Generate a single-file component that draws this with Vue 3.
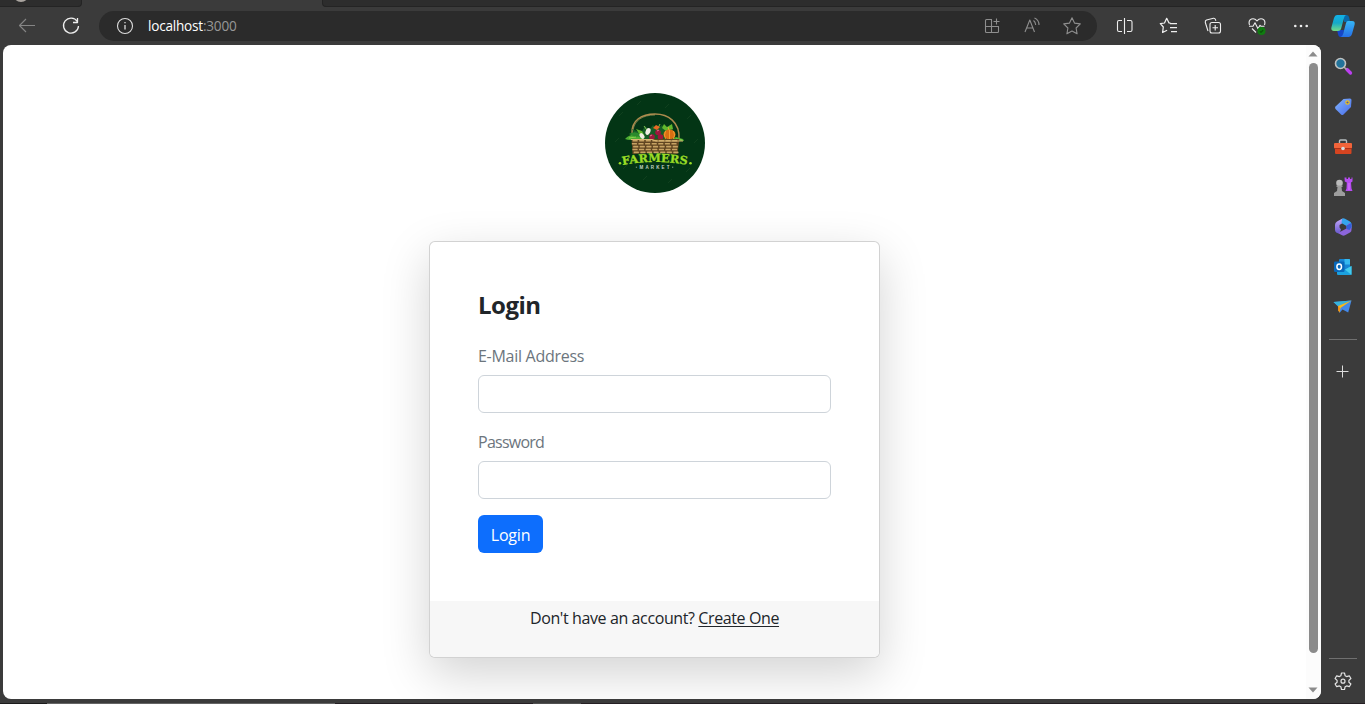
<script setup>
const stars = 'M12 3.8l2.5 5.3 5.8.8-4.2 4.1 1 5.8-5.1-2.8-5.1 2.8 1-5.8-4.2-4.1 5.8-.8z'
const bricks = []
for (let r = 0; r < 5; r++) {
  for (let c = 0; c < 7; c++) {
    bricks.push({ x: 27.5 + r * 0.3 + c * 6.6 - (r % 2) * 1, y: 47 + r * 2.9, key: r * 10 + c })
  }
}
</script>

<template>
  <div class="browser">
    <div class="tabs">
      <div class="tab tab-left"><span class="favicon"></span></div>
      <div class="tab-active"></div>
      <div class="tab tab-rest"></div>
    </div>
    <header class="toolbar">
      <svg class="ico dim" viewBox="0 0 24 24"><path d="M20 11.500H4.500M11 5l-6.500 6.500L11 18" /></svg>
      <svg class="ico refresh" viewBox="0 0 24 24"><path d="M18.300 7.500A7.500 7.500 0 1 0 19.500 12M18.500 4v4.500h-4.500" stroke-width="1.300" /></svg>
      <div class="address">
        <svg class="ico soft" viewBox="0 0 24 24"><circle cx="12" cy="12" r="7.500" /><path d="M12 11v4.500M12 8v1.300" stroke-width="1.300" /></svg>
        <span class="url">localhost<i>:3000</i></span>
        <div class="actions">
          <svg class="ico gray" viewBox="0 0 24 24"><path d="M12 5.500H6.500q-1 0-1 1v11q0 1 1 1h11q1 0 1-1v-5h-13M11.500 5.500v13M16.500 4.500v6M13.500 7.500h6" /></svg>
          <svg class="ico gray" viewBox="0 0 24 24"><path d="M5 18L9.800 6l4.700 12M6.800 14h6M13.500 6.500q2 1.500 2.200 4.500M14.500 4q4.500 2 4.500 7" /></svg>
          <svg class="ico gray" viewBox="0 0 24 24"><path :d="stars" /></svg>
        </div>
      </div>
      <div class="tools">
        <svg class="ico" viewBox="0 0 24 24"><path d="M9 6.500H6q-1.500 0-1.500 1.500v8q0 1.500 1.500 1.500h3M14 6.500h3.500q1.500 0 1.500 1.500v8q0 1.500-1.500 1.500H14M11.500 4v16" /></svg>
        <svg class="ico" viewBox="0 0 24 24"><path d="M13.500 9.200L12 9 9.700 4.300 7.500 9l-4.200.7 3 3.300-.7 5.500 4.500-2.300M13 9.500h7M13 13.500h7M14 17.500h6" stroke-width="1.250" /></svg>
        <svg class="ico" viewBox="0 0 24 24"><rect x="9" y="8.500" width="10.500" height="10.500" rx="2" /><path d="M14.200 11v5.500M11.500 13.700H17M7 17L4.300 8.500Q4 6.500 5.500 6l7-1.800q1.500-.2 2 1.500l.4 1" /></svg>
        <svg class="ico" viewBox="0 0 24 24"><path d="M4.500 11Q3 6.500 6.500 5q3-1 5.500 1.800Q14.500 4 17.500 5q3.500 1.500 2 6M4 12.300h4l2-3.500 3 6 2-3.500 1 1h3.500M7 14.500l4 4" /><circle cx="16.500" cy="17" r="4" fill="#107c10" stroke="none" /><path d="M14.800 17.300l1.200 1 2.200-2.300" stroke="#0b4d0b" /></svg>
        <svg class="ico" viewBox="0 0 24 24"><g fill="#eee" stroke="none"><circle cx="6.300" cy="12" r="1.300" /><circle cx="12" cy="12" r="1.300" /><circle cx="17.700" cy="12" r="1.300" /></g></svg>
      </div>
      <svg class="copilot" viewBox="0 0 24 24">
        <defs>
          <linearGradient id="ca" x1="0" y1="0" x2="0" y2="1"><stop offset="0" stop-color="#11b1e8" /><stop offset=".5" stop-color="#16a9c9" /><stop offset="1" stop-color="#74dc86" /></linearGradient>
          <linearGradient id="cb" x1="0" y1="0" x2="0" y2="1"><stop offset="0" stop-color="#36b6f5" /><stop offset="1" stop-color="#2670e8" /></linearGradient>
        </defs>
        <path d="M12 1h3.500q2 0 2.500 2l1.200 5h-6z" fill="#0868aa" />
        <path d="M6 16h7l-1 7H9.500Q7.500 23 7 20z" fill="#1546c8" />
        <path d="M6 1h9q-1.500.5-2 3l-3 11q-.8 2-3 2H3q-3.500 0-2.500-4L3 4Q3.800 1 6 1z" fill="url(#ca)" />
        <path d="M17 7h4q3.500 0 2.500 4L21 20q-.8 3-3 3H9.500q2-.5 2.600-3L15 9q.5-2 2-2z" fill="url(#cb)" />
      </svg>
    </header>

    <div class="middle">
      <main class="page">
        <div class="content">
          <svg class="logo" viewBox="0 0 100 100">
            <circle cx="50" cy="50" r="50" fill="#033515" />
            <g stroke="#174523" stroke-width=".7"><path d="M14 23l4-4M32 12l4-4M60 15l4-4M82 26l4-4M10 49l4-4M89 50l4-4M18 76l4-4M38 87l4-4M63 90l4-4M81 79l4-4" /></g>
            <path d="M27 41C26 27 37 21 50 21S75 29 74 46" fill="none" stroke="#ad8a4d" stroke-width="1.500" />
            <path d="M28 38C29 27 38 22 50 22" fill="none" stroke="#e0bb73" stroke-width=".5" />
            <path d="M27 36l9 4 4-7 4 4 4-5 4 4 5-4 4 5 7-1-2 12H33z" fill="#165d26" />
            <path d="M20 46q5-5 11-4l11 5q-6 1-11-1-6 2-11 0zM67 46l4-2 7 2 1 2H69z" fill="#4cae32" />
            <path d="M24 41q4-3 9-1l4 3-7 1z" fill="#2b8a2c" />
            <path d="M31 36l6 2 3 6-5-2zM57 35l2-4 3 3 5-3 1 5-7 2z" fill="#62b82d" />
            <path d="M24 45l7-1M71 46l6 1M39 33l3 4M55 31l-2 4" stroke="#9cdc55" stroke-width=".8" />
            <g fill="#f1eee4"><ellipse cx="37" cy="43" rx="2" ry="3.200" transform="rotate(-35 37 43)" /><ellipse cx="43" cy="38.500" rx="2.300" ry="3.500" transform="rotate(25 43 38.500)" /></g>
            <g fill="#9e173d"><circle cx="47" cy="44" r="2.800" /><circle cx="53" cy="39.500" r="2.800" /><circle cx="55.500" cy="44" r="2.800" /></g>
            <path d="M45 43l2-1M52 38l2-1" stroke="#f18aa0" stroke-width=".8" />
            <path d="M48 35l3-3 4 2-3 3z" fill="#e96a24" />
            <ellipse cx="64.500" cy="41.500" rx="6" ry="5" fill="#d96e13" />
            <path d="M60.500 38q-2 4 0 8M64.500 37v10M68.500 38q2 4 0 8M64 37l-1-3" fill="none" stroke="#ffb13a" stroke-width=".7" />
            <path d="M26.500 46h48l-2 15-22-1.500-23 1.500z" fill="#604521" />
            <g fill="#c7a363"><rect v-for="b in bricks" :key="b.key" :x="b.x" :y="b.y" width="5.200" height="1.600" rx=".5" /></g>
            <path d="M26 46.500h21l4 1.500h27" fill="none" stroke="#d9b775" stroke-width="1.200" />
            <path id="arc" d="M17.500 72Q50 66 83 72" fill="none" />
            <text class="brand"><textPath href="#arc" textLength="65" lengthAdjust="spacingAndGlyphs">FARMERS</textPath></text>
            <circle cx="15" cy="70.300" r="1.300" fill="#9bdd26" /><circle cx="85.500" cy="70.300" r="1.300" fill="#9bdd26" />
            <text class="sub" x="34.500" y="75.800" textLength="30">MARKET</text>
            <path d="M30.800 74.200h1.300M67 74.200h1.300" stroke="#c3d5c5" stroke-width=".7" />
          </svg>
          <section class="card">
            <form class="body" @submit.prevent>
              <h1>Login</h1>
              <label for="email">E-Mail Address</label>
              <input id="email" type="email" />
              <label class="tight" for="password">Password</label>
              <input id="password" type="password" />
              <button type="submit">Login</button>
            </form>
            <footer>Don't have an account? <a>Create One</a></footer>
          </section>
        </div>
        <div class="scrollbar">
          <svg class="arrow" viewBox="0 0 10 6"><path d="M5 .5L9.500 5.500h-9z" /></svg>
          <div class="thumb"></div>
          <svg class="arrow" viewBox="0 0 10 6"><path d="M5 5.500L9.500.5h-9z" /></svg>
        </div>
      </main>
      <aside class="sidebar">
        <svg class="app" viewBox="0 0 24 24"><path d="M16 15.500l3.500 3.500" stroke="#bb3ff0" stroke-width="3.300" stroke-linecap="round" /><path d="M13 13l2.500 2.500" stroke="#aaa" stroke-width="1.500" /><circle cx="9.500" cy="9.500" r="5" fill="#22739b" stroke="#bfc1c1" stroke-width="1.600" /></svg>
        <svg class="app" viewBox="0 0 24 24"><defs><linearGradient id="tag" x2="1" y2="1"><stop stop-color="#82b6ff" /><stop offset="1" stop-color="#486be8" /></linearGradient></defs><path d="M12.500 4L19 3.500q1.500 0 1.500 1.500l-.5 7-7.500 7.500q-1.200 1-2.400 0L4.500 14q-1-1.200 0-2.400z" fill="url(#tag)" /><circle cx="16.500" cy="7.500" r="1.700" fill="#4e5fa9" stroke="#f2c21a" stroke-width="1.200" /></svg>
        <svg class="app" viewBox="0 0 24 24"><path d="M8.500 8V6q0-1 1-1h5q1 0 1 1v2" fill="none" stroke="#b7bdc0" stroke-width="1.400" /><rect x="4" y="12" width="16.500" height="7" rx="1" fill="#d54420" /><rect x="3" y="8" width="18" height="5.500" rx="1" fill="#f2643a" /><path d="M3 13.500h18" stroke="#9d2b14" stroke-width=".8" /><circle cx="12" cy="13.500" r="1.800" fill="#d7dcdf" /></svg>
        <svg class="app" viewBox="0 0 24 24"><path d="M13.500 2.500h2V4H17V2.500h2V4h1.500V2.500h1v4l-1.500 1 .5 6 1 2.500h-7l1-2.500.3-6-2-1z" fill="#b64cf0" /><path d="M17 8h2v7h-2z" fill="#d87aff" opacity=".5" /><circle cx="8.500" cy="8" r="3.300" fill="#bbb" /><path d="M5.500 10.500h6V12h-1l.5 4 3 2v3H3v-3l3-2 .5-4h-1z" fill="#9d9d9d" /></svg>
        <svg class="app" viewBox="0 0 24 24"><defs><linearGradient id="ma" x2="0" y2="1"><stop stop-color="#c6a9fc" /><stop offset="1" stop-color="#6759cc" /></linearGradient></defs><path d="M11.500 3.500L6 6.500q-2 1.200-2 3.500v5q0 2 2 3l2.500.5 1.500-4-1.500-2V10l4-2.500z" fill="url(#ma)" /><path d="M11 3.700q1.500-.8 3 0l4.500 2.500q2 1 2 3.300v4L15.500 11l-5-3z" fill="#35a5ef" /><path d="M20.500 10v5q0 1.500-1.500 2.500l-5 2.800q-1.500.8-3 0l-4-2.300 8.500-4.500v-2.700l3-3z" fill="#8c65db" /><path d="M15.500 10.500L20.500 8v4l-2 3-3-1z" fill="#345fdb" /></svg>
        <svg class="app" viewBox="0 0 24 24"><path d="M8 5q0-1 1-1h9q1 0 1 1v10H8z" fill="#1685d4" /><path d="M13.500 4H18q1 0 1 1v4.500h-5.500z" fill="#35b9ef" /><path d="M6 11l7 4 7.500-4v8q0 1-1 1H7q-1 0-1-1z" fill="#1ba1df" /><path d="M14 14.500l6.500-3.500v9z" fill="#43cbed" /><rect x="3" y="6.500" width="10.500" height="10.500" rx="1.200" fill="#0867b9" /><ellipse cx="8.200" cy="11.700" rx="2.300" ry="2.700" fill="none" stroke="#fff" stroke-width="1.500" /></svg>
        <svg class="app" viewBox="0 0 24 24"><path d="M2.500 7L20.500 5.500l-3.300 12-5.700-3-3 3.500-1.500-6.500z" fill="#4288e9" /><path d="M2.500 7L20.500 5.500 7 11z" fill="#36b4dc" /><path d="M7 11L20.500 5.500 9.500 13l-1 4.500-1.500-2.500z" fill="#f6b91c" /><path d="M7 11l2 2-.5 4.500L7 15z" fill="#f28c16" /></svg>
        <hr />
        <svg class="app plus" viewBox="0 0 24 24"><path d="M5.500 12.500h12M11.500 6.500v12" stroke="#ddd" /></svg>
        <div class="spacer"></div>
        <hr class="last" />
        <svg class="app" viewBox="0 0 24 24"><g fill="none" stroke="#e4e4e4" stroke-width="1.200" stroke-linejoin="round"><path d="M10.500 4h3l.6 2.700 1.500.9 2.700-.8 1.600 2.700-2 1.900v1.800l2 1.800-1.600 2.700-2.700-.8-1.500.9-.6 2.700h-3l-.6-2.700-1.500-.9-2.700.8L4.100 15l2-1.800v-1.800l-2-1.900 1.600-2.700 2.700.8 1.500-.9z" /><circle cx="12" cy="12.200" r="2" /></g></svg>
      </aside>
    </div>
    <div class="bottom"><span class="seg s1"></span><span class="seg s2"></span><span class="seg s3"></span><span class="seg s4"></span></div>
  </div>
</template>

<style>
body { margin: 0; overflow: hidden; }
</style>

<style scoped>
* { box-sizing: border-box; }
.browser { width: 1365px; height: 704px; background: #3b3b3b; display: flex; flex-direction: column; overflow: hidden; font-family: "Open Sans", "Noto Sans", sans-serif; }
svg { display: block; flex: none; }
.tabs { height: 7px; display: flex; flex: none; }
.tab { background: #2d2d2d; border-bottom: 1px solid #242424; }
.tab-left { width: 82px; border-right: 1px solid #242424; border-bottom-right-radius: 4px; overflow: hidden; }
.favicon { display: block; width: 16px; height: 16px; margin: -14px 0 0 13px; border-radius: 50%; background: #aaa5a0; }
.tab-active { width: 240px; }
.tab-rest { flex: 1; border-left: 1px solid #242424; border-bottom-left-radius: 4px; }
.toolbar { height: 38px; flex: none; display: flex; align-items: center; padding-left: 15px; }
.ico { width: 24px; height: 24px; fill: none; stroke: #eee; stroke-width: 1.1; stroke-linejoin: round; }
.dim { stroke: #858585; }
.gray { stroke: #8e8e8e; }
.soft { stroke: #ddd; }
.refresh { margin-left: 20px; }
.address { width: 998px; height: 30px; margin-left: 16px; padding: 0 13px 0 14px; border-radius: 15px; background: #2b2b2b; display: flex; align-items: center; }
.url { margin-left: 11px; color: #fff; font-size: 13.6px; letter-spacing: -.22px; line-height: 20px; }
.url i { font-style: normal; color: #979797; }
.actions { margin-left: auto; display: flex; gap: 16px; }
.tools { display: flex; gap: 20px; margin-left: 16px; }
.copilot { width: 24px; height: 24px; margin-left: 18px; }
.middle { height: 654px; flex: none; display: flex; padding-left: 3px; }
.page { width: 1318px; background: #fff; border-radius: 8px; overflow: hidden; display: flex; }
.content { width: 1303px; flex: none; display: flex; flex-direction: column; align-items: center; padding-top: 48px; }
.logo { width: 100px; height: 100px; }
.brand { font: bold 11.3px "DejaVu Serif", serif; fill: #9bdd26; stroke: #9bdd26; stroke-width: .3; }
.sub { font: bold 4.5px "Liberation Sans", sans-serif; fill: #c3d5c5; }
.card { width: 451px; height: 417px; flex: none; margin-top: 48px; border: 1px solid rgba(0, 0, 0, .175); background: #fff; border-radius: 6px; box-shadow: 0 16px 48px rgba(0, 0, 0, .175); overflow: hidden; color: #212529; }
.body { height: 359px; padding: 48px; display: flex; flex-direction: column; align-items: flex-start; }
h1 { margin: 0 0 24px; font-size: 24px; line-height: 29px; font-weight: 700; letter-spacing: -.5px; }
label { padding-top: 1px; font-size: 16px; line-height: 24px; margin-bottom: 7px; color: #6c757d; letter-spacing: -.28px; }
.tight { letter-spacing: -.75px; }
input { width: 353px; height: 38px; flex: none; margin: 0 0 16px; border: 1px solid #ced4da; border-radius: 6px; background: #fff; outline: 0; }
button { width: 65px; height: 38px; flex: none; border: 0; border-radius: 6px; background: #0d6efd; color: #fff; padding: 1px 0 0; font-family: inherit; font-size: 16px; line-height: 24px; letter-spacing: -.2px; }
footer { height: 56px; padding-top: 5px; background: #f7f7f7; text-align: center; font-size: 16px; line-height: 24px; letter-spacing: -.39px; }
footer a { text-decoration: underline; text-underline-offset: 2px; text-decoration-thickness: 1px; }
.scrollbar { width: 15px; background: #fcfcfc; display: flex; flex-direction: column; align-items: center; padding: 6px 0; }
.arrow { width: 10px; height: 6px; margin-right: 1px; fill: #8b8b8b; }
.thumb { width: 9px; height: 590px; flex: none; margin: 6px 0 34px; border-radius: 5px; background: #8b8b8b; }
.sidebar { width: 43px; display: flex; flex-direction: column; align-items: center; gap: 16px; padding-top: 10px; }
.app { width: 24px; height: 24px; fill: none; }
.sidebar > :first-child { margin-top: -1px; margin-bottom: 1px; }
hr { width: 28px; height: 1px; flex: none; margin: 4px 0 3px; border: 0; background: #707070; }
.spacer { flex: 1; }
.last { margin: 0 0 -6px; }
.sidebar > :last-child { margin-bottom: 6px; }
.bottom { margin-top: 4px; height: 1px; background: #251f23; display: flex; }
.seg { height: 1px; flex: none; }
.s1 { width: 47px; background: #1b1b1b; }
.s2 { width: 288px; background: #656565; }
.s3 { width: 198px; background: #251f23; }
.s4 { width: 48px; background: #505050; }
</style>
